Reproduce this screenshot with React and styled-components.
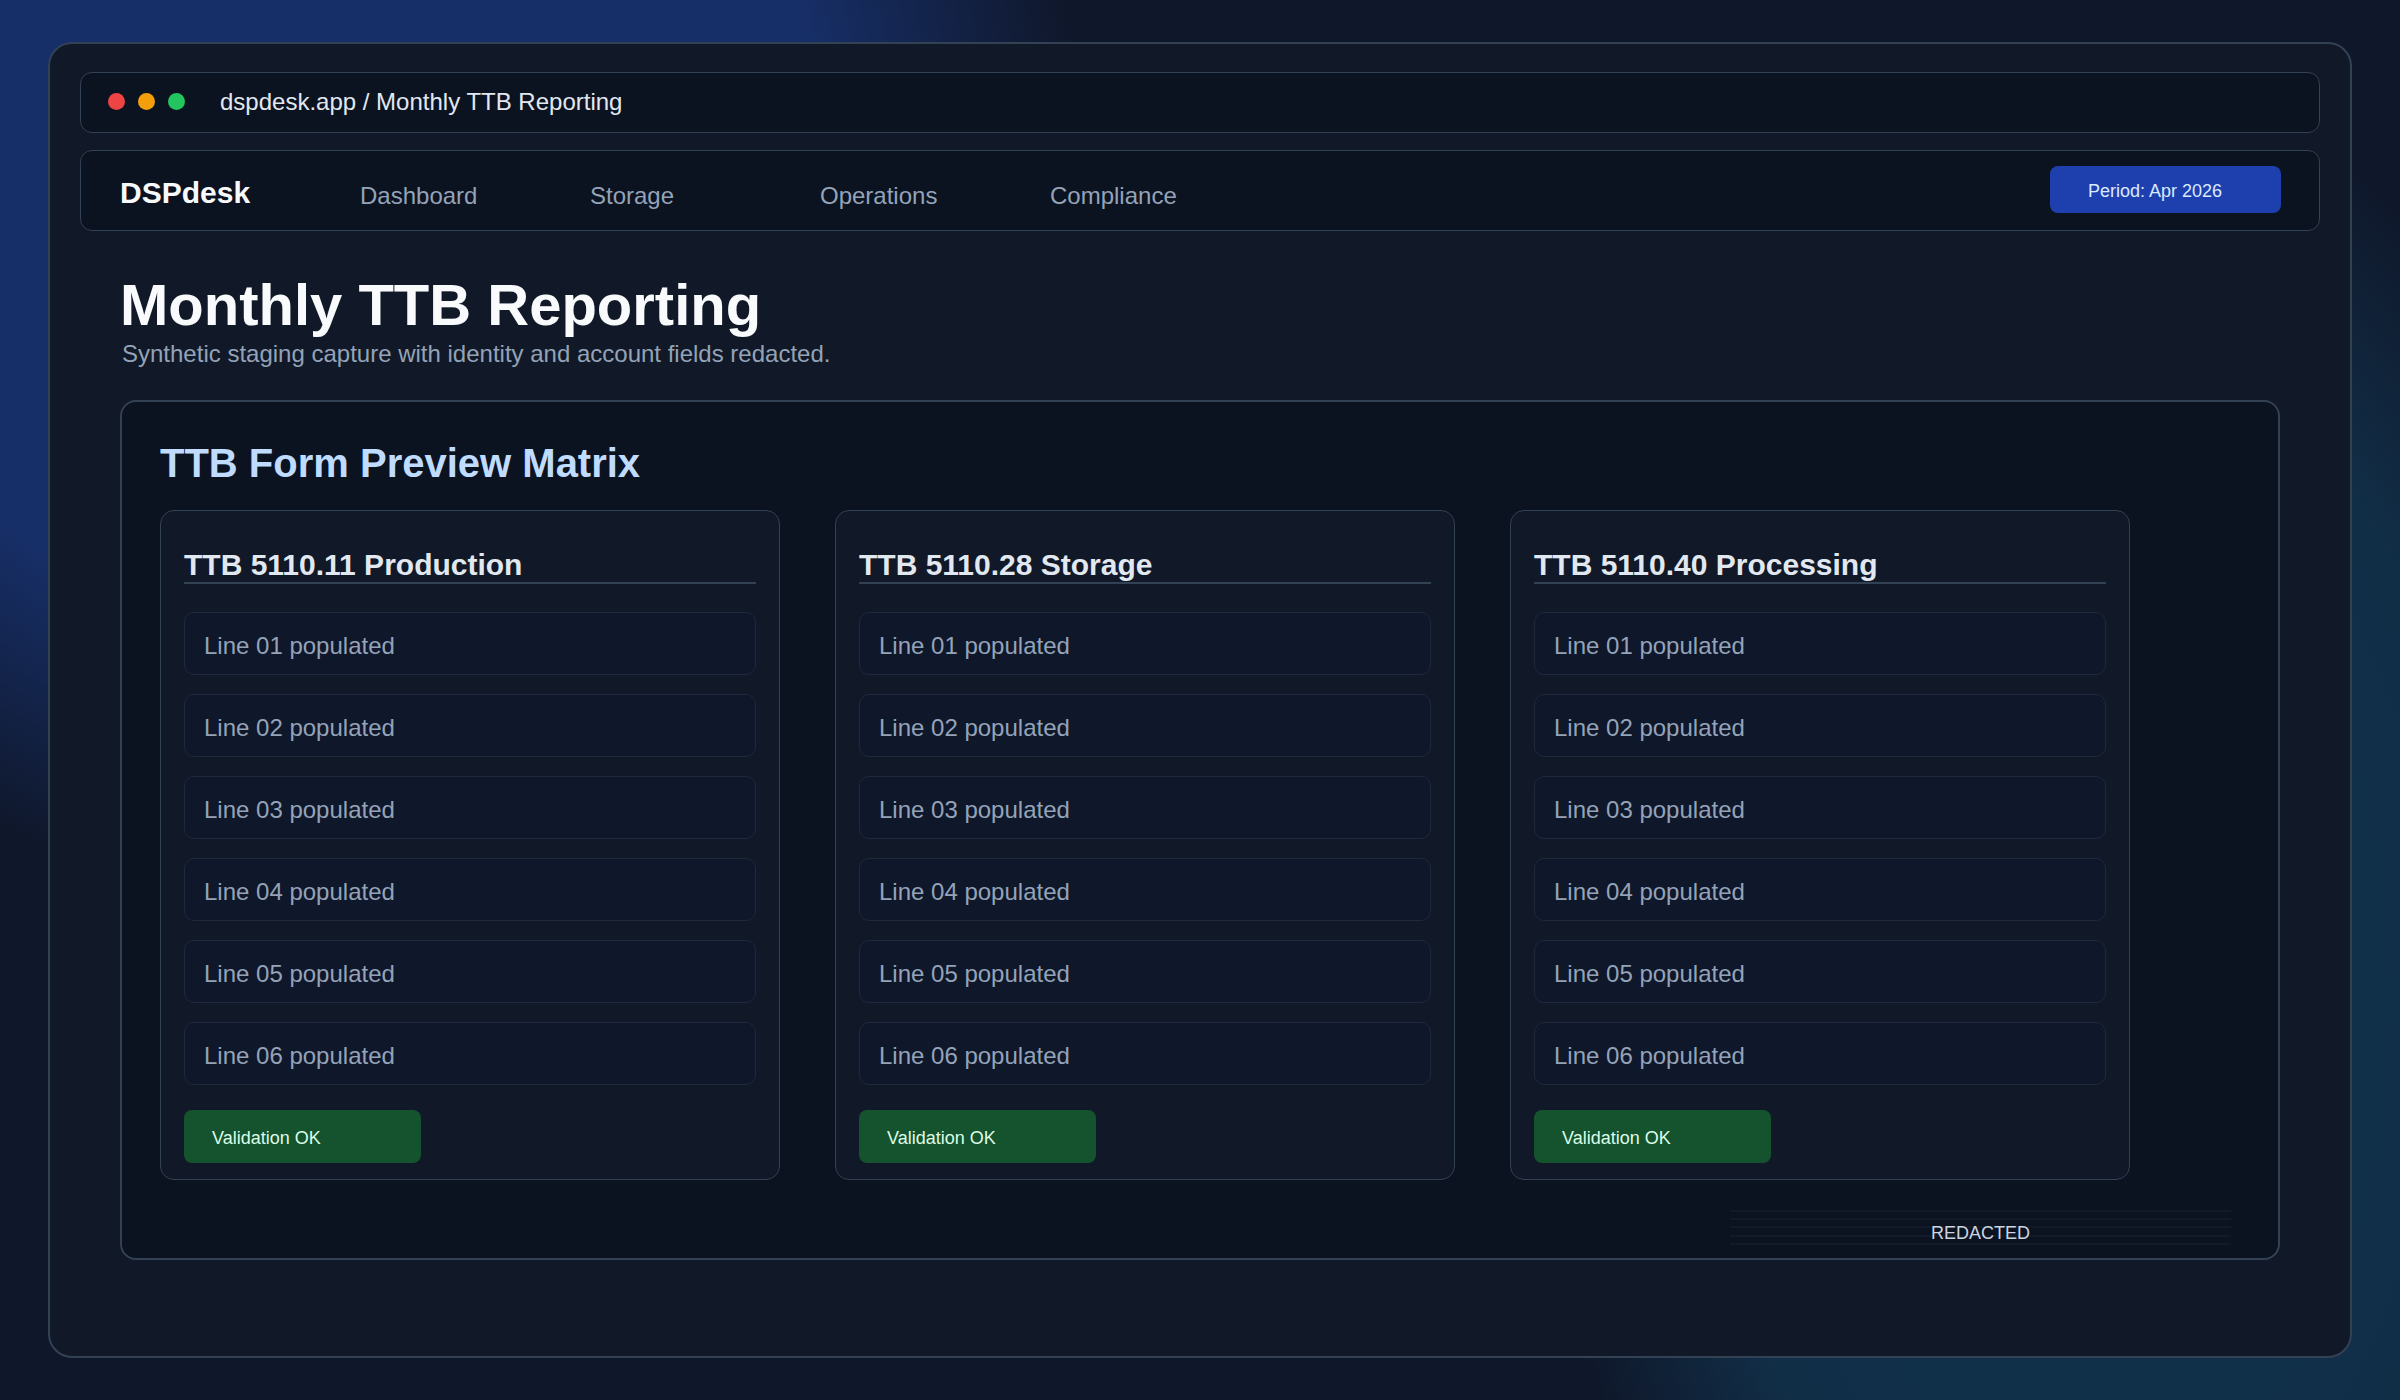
import styled, { createGlobalStyle } from "styled-components";

const GlobalStyle = createGlobalStyle`
  * { box-sizing: border-box; }
  html, body { margin: 0; padding: 0; }
  body {
    font-family: "Liberation Sans", Arial, sans-serif;
    background: #0f172a;
  }
`;

const Page = styled.div`
  width: 2400px;
  height: 1400px;
  padding: 42px 48px;
  overflow: hidden;
  background:
    radial-gradient(circle 760px at 320px 140px, #172f68 0, #172f68 65%, transparent 100%),
    radial-gradient(557px 947px at 2100px 1000px, #0f324c 0, #112e47 70%, transparent 100%),
    #0f172a;
`;

const Window = styled.div`
  height: 1316px;
  padding: 28px 30px;
  display: flex;
  flex-direction: column;
  background: #111827;
  border: 2px solid #334155;
  border-radius: 24px;
`;

const TitleBar = styled.div`
  flex: none;
  height: 61px;
  padding: 0 0 2px 27px;
  display: flex;
  align-items: center;
  background: #0b1220;
  border: 1px solid #334155;
  border-radius: 12px;
`;

const Dot = styled.span`
  width: 17px;
  height: 17px;
  margin-right: 13px;
  border-radius: 50%;
  background: ${(props) => props.color};
`;

const Url = styled.span`
  margin-left: 22px;
  font-size: 24px;
  color: #e2e8f0;
`;

const NavBar = styled.nav`
  flex: none;
  height: 81px;
  margin-top: 17px;
  padding: 0 38px 0 39px;
  display: flex;
  align-items: center;
  background: #0b1220;
  border: 1px solid #334155;
  border-radius: 12px;
`;

const Logo = styled.div`
  width: 240px;
  padding-top: 5px;
  font-size: 30px;
  font-weight: 700;
  color: #f8fafc;
`;

const NavLinks = styled.div`
  display: grid;
  grid-template-columns: repeat(4, 230px);
  padding-top: 10px;
`;

const NavLink = styled.a`
  font-size: 24px;
  color: #94a3b8;
`;

const PeriodBadge = styled.div`
  width: 231px;
  height: 47px;
  margin: 0 0 2px auto;
  padding: 4px 0 0 38px;
  display: flex;
  align-items: center;
  font-size: 18px;
  color: #dbeafe;
  background: #1e40af;
  border-radius: 8px;
`;

const Heading = styled.h1`
  margin: 41px 0 0 40px;
  font-size: 58px;
  line-height: 66px;
  font-weight: 700;
  color: #f8fafc;
`;

const Subtitle = styled.p`
  margin: 2px 0 0 42px;
  font-size: 24px;
  line-height: 28px;
  color: #94a3b8;
`;

const Panel = styled.section`
  flex: none;
  width: 2160px;
  height: 860px;
  margin: 32px 0 0 40px;
  padding: 38px 38px 0;
  background: #0b1220;
  border: 2px solid #334155;
  border-radius: 16px;
`;

const PanelTitle = styled.h2`
  margin: 0;
  font-size: 40px;
  line-height: 46px;
  font-weight: 700;
  color: #bfdbfe;
`;

const CardGrid = styled.div`
  margin-top: 24px;
  display: grid;
  grid-template-columns: repeat(3, 620px);
  gap: 55px;
`;

const Card = styled.article`
  height: 670px;
  padding: 37px 23px 0;
  background: #111827;
  border: 1px solid #334155;
  border-radius: 14px;
`;

const CardTitle = styled.h3`
  height: 36px;
  margin: 0 0 28px;
  font-size: 30px;
  line-height: 34px;
  font-weight: 700;
  color: #e2e8f0;
  border-bottom: 2px solid #334155;
`;

const Lines = styled.div`
  display: flex;
  flex-direction: column;
  gap: 19px;
`;

const LineRow = styled.div`
  height: 63px;
  padding: 5px 0 0 19px;
  display: flex;
  align-items: center;
  font-size: 24px;
  color: #94a3b8;
  background: #0f172a;
  border: 1px solid #1e293b;
  border-radius: 10px;
`;

const StatusBadge = styled.div`
  width: 237px;
  height: 53px;
  margin-top: 25px;
  padding: 3px 0 0 28px;
  display: flex;
  align-items: center;
  font-size: 18px;
  color: #dcfce7;
  background: #14532d;
  border-radius: 8px;
`;

const Redaction = styled.div`
  width: 501px;
  height: 35px;
  margin: 30px 9px 0 auto;
  padding-top: 12px;
  display: flex;
  justify-content: center;
  align-items: center;
  font-size: 18px;
  color: #cbd5e1;
  background: repeating-linear-gradient(
    180deg,
    #111a27 0,
    #111a27 2px,
    transparent 2px,
    transparent 8.25px
  );
`;

const forms = ["TTB 5110.11 Production", "TTB 5110.28 Storage", "TTB 5110.40 Processing"];
const lines = ["01", "02", "03", "04", "05", "06"];
const navItems = ["Dashboard", "Storage", "Operations", "Compliance"];

export default function App() {
  return (
    <Page>
      <GlobalStyle />
      <Window>
        <TitleBar>
          <Dot color="#ef4444" />
          <Dot color="#f59e0b" />
          <Dot color="#22c55e" />
          <Url>dspdesk.app / Monthly TTB Reporting</Url>
        </TitleBar>
        <NavBar>
          <Logo>DSPdesk</Logo>
          <NavLinks>
            {navItems.map((item) => (
              <NavLink key={item}>{item}</NavLink>
            ))}
          </NavLinks>
          <PeriodBadge>Period: Apr 2026</PeriodBadge>
        </NavBar>
        <Heading>Monthly TTB Reporting</Heading>
        <Subtitle>Synthetic staging capture with identity and account fields redacted.</Subtitle>
        <Panel>
          <PanelTitle>TTB Form Preview Matrix</PanelTitle>
          <CardGrid>
            {forms.map((form) => (
              <Card key={form}>
                <CardTitle>{form}</CardTitle>
                <Lines>
                  {lines.map((line) => (
                    <LineRow key={line}>Line {line} populated</LineRow>
                  ))}
                </Lines>
                <StatusBadge>Validation OK</StatusBadge>
              </Card>
            ))}
          </CardGrid>
          <Redaction>REDACTED</Redaction>
        </Panel>
      </Window>
    </Page>
  );
}
